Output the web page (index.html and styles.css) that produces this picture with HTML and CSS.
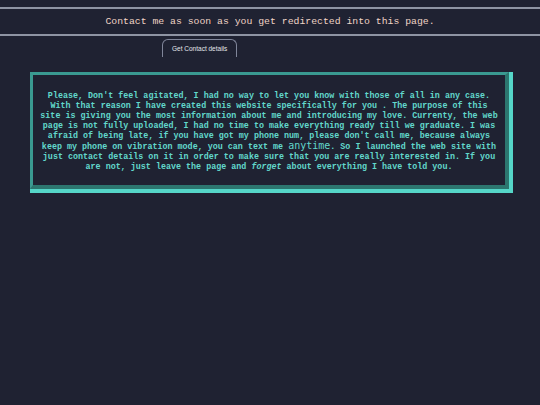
FILE: index.html
```html
<!DOCTYPE html>
<html lang="en">
<head>
<meta charset="utf-8">
<title>Contact</title>
<link rel="stylesheet" href="styles.css">
</head>
<body>
<header class="top">
  <p class="headline">Contact me as soon as you get redirected into this page.</p>
</header>
<nav class="tabs">
  <button class="tab" type="button">Get Contact details</button>
</nav>
<main class="frame">
  <div class="panel">
    <p class="msg">Please, Don't feel agitated, I had no way to let you know with those of all in any case.<br>With that reason I have created this website specifically for you . The purpose of this<br>site is giving you the most information about me and introducing my love. Currenty, the web<br>page is not fully uploaded, I had no time to make everything ready till we graduate. I was<br>afraid of being late, if you have got my phone num, please don't call me, because always<br>keep my phone on vibration mode, you can text me <span class="big">anytime</span>. So I launched the web site with<br>just contact details on it in order to make sure that you are really interested in. If you<br>are not, just leave the page and <em>forget</em> about everything I have told you.</p>
  </div>
</main>
</body>
</html>
```

FILE: styles.css
```css
html, body {
  margin: 0;
  padding: 0;
  background: #1f2232;
  height: 100%;
}

body {
  font-family: "Liberation Mono", monospace;
}

.top {
  margin-top: 7px;
  border-top: 2px solid #8e94a3;
  border-bottom: 2px solid #8e94a3;
}

.headline {
  margin: 0;
  height: 25px;
  line-height: 25px;
  text-align: center;
  font-size: 9.8px;
  color: #f0d4c6;
}

.tabs {
  padding-left: 162px;
  margin-top: 3px;
  height: 18px;
}

.tab {
  display: block;
  height: 18px;
  padding: 0 9px;
  background: #1f2232;
  border: 1px solid #80869a;
  border-bottom: none;
  border-radius: 6px 6px 0 0;
  color: #e4e6ec;
  font-family: "Liberation Sans", Arial, sans-serif;
  font-size: 6.5px;
  line-height: 16px;
}

.frame {
  margin: 15px 27px 0 30px;
  border-right: 4px solid #55d6c8;
  border-bottom: 4px solid #55d6c8;
}

.panel {
  border: 3px solid #3a9a91;
  border-right: 4px solid #2c766f;
  border-bottom: 4px solid #2c766f;
  padding: 16px 0 13px;
}

.msg {
  margin: 0;
  text-align: center;
  font-size: 8.4px;
  line-height: 10px;
  font-weight: bold;
  color: #62d8cc;
  white-space: nowrap;
}

.big {
  font-family: "DejaVu Sans Mono", monospace;
  font-size: 10px;
  font-weight: normal;
}
```
